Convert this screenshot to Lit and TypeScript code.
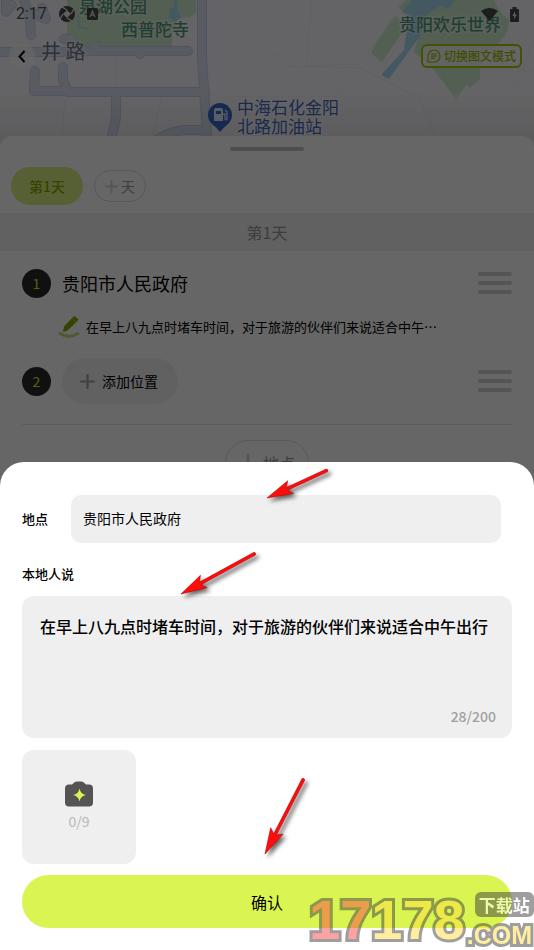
import { LitElement, html, css, svg } from "lit";
import { customElement, state } from "lit/decorators.js";

const arrow = (x: number, y: number, angle: number, length: number) => svg`
  <path
    transform="translate(${x} ${y}) rotate(${angle})"
    d="M0 0 L26 -7 L22 -1.5 L${length} -1.5 Q${length + 2} 0 ${length} 1.5 L22 1.5 L26 7 Z"
  />`;

/** Street map with place names, drawn behind the itinerary panel. */
@customElement("city-map")
class CityMap extends LitElement {
  static styles = css`
    :host {
      display: block;
      height: 148px;
      background: #fbfbff;
      font-family: "Noto Sans CJK SC", sans-serif;
    }
    svg {
      display: block;
      width: 100%;
      height: 100%;
    }
    .park {
      fill: #d3edcf;
    }
    .water {
      fill: #abddf5;
    }
    .lane {
      fill: none;
      stroke: #f0f1fb;
      stroke-width: 1;
    }
    .road {
      fill: none;
      stroke: #dde4f5;
      stroke-linecap: round;
      stroke-linejoin: round;
    }
    .edge {
      stroke: #cbd3ea;
    }
    .name {
      font-size: 17px;
      paint-order: stroke;
      stroke: #ffffff;
      stroke-opacity: 0.4;
      stroke-width: 3px;
    }
    .green {
      fill: #4f9b7c;
      font-weight: 500;
    }
    .street {
      font-size: 20px;
      fill: #72778f;
    }
    .poi {
      fill: #4568c4;
    }
  `;

  render() {
    const roads = svg`
      <path d="M202 -6 V58 L208 150" />
      <path d="M-6 52 H62 L95 51 H188 M95 46 V50 M140 53 V54" />
      <path d="M35 71 L34 91 H62 M63 67 V80 L68 92 H205" />
      <path d="M116 93 V118 L109 150" />
      <path d="M150 144 Q170 130 186 130 H206" />
      <path d="M6 -4 V12 L12 5 M24 0 L30 18 L31 35 M30 12 L46 19 L42 8" />
      <path d="M64 39 H72" />`;
    return html`
      <svg viewBox="0 0 534 148" preserveAspectRatio="xMidYMin slice" role="img" aria-label="地图">
        <defs>
          <linearGradient id="fade" x1="0" y1="0" x2="0" y2="1">
            <stop offset="0" stop-color="#000" stop-opacity="0" />
            <stop offset="1" stop-color="#000" stop-opacity="0.1" />
          </linearGradient>
        </defs>
        <path class="park" d="M67 0 H196 V13 L190 17 L178 19 L172 30 V46 H67 Z" />
        <path class="water" d="M174 0 H178 L177 8 L181 17 L175 22 L169 18 V9 L174 7 Z" />
        <path class="park" d="M424 14 L434 0 H494 Q500 14 509 20 Q509 32 500 42 Q488 54 480 66 V79 L470 88 L467 84 L456 99 L434 70 L414 52 Z" />
        <path class="park" d="M394 16 L399 18 L401 34 L382 62 L371 53 Q380 34 394 16 Z M406 0 H420 L405 12 L398 8 Z" />
        <path class="water" d="M412 0 H455 L449 9 L440 6 L424 17 L420 36 L389 79 L381 75 L404 50 L406 35 L413 18 L402 12 Z" />
        <path d="M78 14 Q80 24 78 26 L88 29" fill="none" stroke="#abddf5" stroke-width="1.5" />
        <path class="lane" d="M312 0 L306 66 L360 64 L395 16 M267 66 L276 52 L287 66 L360 68 L420 98 L434 136 M116 56 V88 M65 96 L62 136 M0 96 H534 M162 96 L152 136 M534 72 L488 60 L516 88 L534 40 M360 64 L338 96" />
        <g class="road edge" stroke-width="10">${roads}</g>
        <g class="road" stroke-width="8">${roads}</g>
        <rect y="90" width="534" height="58" fill="url(#fade)" />
        <text class="name green" x="79" y="13">泉湖公园</text>
        <text class="name green" x="121" y="36">西普陀寺</text>
        <text class="name green" x="399" y="31">贵阳欢乐世界</text>
        <text class="name street" x="41" y="59">井 路</text>
        <text class="name poi" x="237" y="114">中海石化金阳</text>
        <text class="name poi" x="237" y="133">北路加油站</text>
        <path d="M220 132 Q217 128 212 124 A12 12 0 1 1 228 124 Q223 128 220 132 Z" fill="#3768c8" />
        <path d="M214 110 Q214 108 216 108 H221 Q223 108 223 110 V121 H214 Z" fill="#dfe8ff" />
        <path d="M216 111 H221 V114 H216 Z" fill="#3768c8" />
        <path d="M223 114 H225 V119 Q226 121 227 119 V112 L225 110" fill="none" stroke="#dfe8ff" stroke-width="1.3" />
      </svg>
    `;
  }
}

@customElement("app-root")
class AppRoot extends LitElement {
  @state() private place = "贵阳市人民政府";
  @state() private note = "在早上八九点时堵车时间，对于旅游的伙伴们来说适合中午出行";

  static styles = css`
    :host {
      display: grid;
      min-height: 100vh;
      overflow: hidden;
      background: #ffffff;
      color: #000000;
      font-family: "Noto Sans CJK SC", sans-serif;
      font-size: 14px;
      line-height: 20px;
    }
    * {
      box-sizing: border-box;
    }
    button,
    input,
    textarea {
      margin: 0;
      padding: 0;
      border: 0;
      background: none;
      color: inherit;
      font: inherit;
    }
    svg {
      display: block;
    }
    .page,
    .layer {
      grid-area: 1 / 1;
      min-width: 0;
    }

    /* top of screen */
    .top {
      position: relative;
    }
    .over {
      position: absolute;
      inset: 0 0 auto 0;
    }
    .status {
      display: flex;
      align-items: center;
      gap: 12px;
      height: 28px;
      padding: 0 15px 0 16px;
      font-family: Roboto, sans-serif;
      font-size: 16px;
      color: #555555;
    }
    .status .push {
      margin-left: auto;
    }
    .nav {
      display: flex;
      align-items: center;
      justify-content: space-between;
      height: 56px;
      padding: 0 12px 0 9px;
    }
    .back {
      display: grid;
      place-items: center;
      width: 26px;
      height: 26px;
      border-radius: 50%;
      background: rgba(255, 255, 255, 0.7);
    }
    .mode {
      display: flex;
      align-items: center;
      gap: 3px;
      height: 24px;
      padding: 0 4px;
      border: 2px solid #a9cc00;
      border-radius: 6px;
      background: rgba(255, 255, 255, 0.7);
      color: #a0c000;
      font-size: 12px;
      font-weight: 500;
    }

    /* itinerary */
    .trip {
      position: relative;
      margin-top: -12px;
      border-radius: 12px 12px 0 0;
      background: #ffffff;
    }
    .grip {
      width: 74px;
      height: 4px;
      margin: 0 auto;
      border-radius: 2px;
      background: #c4c4c4;
    }
    .grip-row {
      padding-top: 11px;
      height: 31px;
    }
    .days {
      display: flex;
      align-items: center;
      gap: 11px;
      height: 38px;
      padding: 0 11px;
    }
    .day {
      height: 38px;
      padding: 0 18px;
      border-radius: 19px;
      background: #daf082;
      color: #87a800;
      font-weight: 500;
    }
    .add {
      display: flex;
      align-items: center;
      justify-content: center;
      gap: 3px;
      height: 32px;
      padding: 0 10px;
      border: 1px solid #e0e0e0;
      border-radius: 23px;
      color: #999999;
    }
    .band {
      margin: 8px 0 0;
      background: #f2f2f2;
      color: #999999;
      font-size: 16px;
      font-weight: 400;
      line-height: 38px;
      text-align: center;
    }
    .stops {
      margin: 0 22px;
      padding: 9px 0 20px;
      border-bottom: 1px solid #e6e6e6;
      list-style: none;
    }
    .stop {
      display: flex;
      align-items: center;
      gap: 11px;
      height: 46px;
    }
    .num {
      flex: none;
      width: 29px;
      border-radius: 50%;
      background: #2a2a2a;
      color: #d2f03c;
      line-height: 29px;
      text-align: center;
    }
    .title {
      font-size: 18px;
    }
    .drag {
      display: flex;
      flex-direction: column;
      gap: 5px;
      width: 34px;
      margin-left: auto;
    }
    .bar {
      height: 4px;
      border-radius: 2px;
      background: #d2d2d2;
    }
    .memo {
      display: flex;
      align-items: center;
      gap: 6px;
      height: 42px;
      margin: 0 0 10px;
      padding: 0 64px 0 36px;
      font-size: 13px;
    }
    .where {
      display: flex;
      align-items: center;
      gap: 7px;
      height: 46px;
      padding: 0 20px 0 18px;
      border-radius: 23px;
      background: #f2f2f2;
    }
    .more {
      display: flex;
      justify-content: center;
      padding-top: 15px;
    }
    .more .add {
      gap: 6px;
      height: 46px;
      padding: 0 13px;
      font-size: 16px;
    }

    /* edit sheet */
    .layer {
      position: relative;
      display: flex;
      flex-direction: column;
      justify-content: flex-end;
      background: rgba(0, 0, 0, 0.6);
    }
    .sheet {
      position: relative;
      display: flex;
      flex-direction: column;
      padding: 33px 22px 22px;
      border-radius: 24px 24px 0 0;
      background: #ffffff;
    }
    .label {
      font-size: 13px;
      font-weight: 500;
    }
    .line {
      display: flex;
      align-items: center;
      gap: 23px;
      padding-right: 11px;
      margin-bottom: 21px;
    }
    .input {
      flex: 1;
      min-width: 0;
      height: 48px;
      padding: 0 12px 2px;
      border-radius: 10px;
      background: #efefef;
    }
    .box {
      display: flex;
      flex-direction: column;
      height: 142px;
      margin: 12px 0;
      padding: 18px 16px 12px 18px;
      border-radius: 12px;
      background: #efefef;
    }
    .area {
      flex: 1;
      display: block;
      width: 100%;
      overflow: hidden;
      resize: none;
      outline: none;
      font-size: 16px;
      font-weight: 500;
      line-height: 24px;
    }
    .count {
      color: #a0a0a0;
      font-weight: 500;
      text-align: right;
    }
    .photo {
      display: flex;
      flex-direction: column;
      align-items: center;
      justify-content: center;
      gap: 4px;
      width: 114px;
      height: 114px;
      margin-bottom: 11px;
      padding-bottom: 2px;
      border-radius: 12px;
      background: #efefef;
      color: #b8b8b8;
    }
    .ok {
      height: 53px;
      border-radius: 27px;
      background: #daf552;
      font-size: 16px;
    }
    .marks {
      position: absolute;
      top: 0;
      left: 0;
      width: 100%;
      height: 100%;
      overflow: visible;
      pointer-events: none;
      filter: drop-shadow(3px 3px 2px rgba(0, 0, 0, 0.6));
    }

    /* site stamp */
    .stamp {
      position: absolute;
      right: 0;
      bottom: 0;
      display: flex;
      align-items: flex-end;
      gap: 2px;
      opacity: 0.5;
      pointer-events: none;
      font-family: "Liberation Sans", sans-serif;
      font-weight: 700;
    }
    .digits,
    .com {
      paint-order: stroke fill;
      -webkit-text-stroke: 6px #404040;
      color: #ffdf3f;
    }
    .digits {
      font-size: 56px;
      line-height: 60px;
    }
    .red {
      color: #ff4848;
    }
    .side {
      display: flex;
      flex-direction: column;
      gap: 4px;
    }
    .tag {
      margin-left: 8px;
      border-radius: 6px;
      background: #404040;
      color: #ffffff;
      font-family: "Noto Sans CJK SC", sans-serif;
      font-size: 17px;
      line-height: 25px;
      text-align: center;
    }
    .com {
      padding-right: 2px;
      font-size: 25px;
      line-height: 29px;
    }
  `;

  private plus(size: number, color: string, width: number) {
    return html`<svg width=${size} height=${size} viewBox="0 0 14 14" aria-hidden="true">
      <path d="M7 1 V13 M1 7 H13" stroke=${color} stroke-width=${width} stroke-linecap="round" />
    </svg>`;
  }

  private drag() {
    return html`<button class="drag" aria-label="拖动排序">
      <span class="bar"></span><span class="bar"></span><span class="bar"></span>
    </button>`;
  }

  render() {
    return html`
      <main class="page">
        <div class="top">
          <city-map></city-map>
          <div class="over">
            <div class="status">
              <span>2:17</span>
              <svg width="16" height="16" viewBox="0 0 16 16" aria-hidden="true">
                <circle cx="8" cy="8" r="8" fill="#4a4a4a" />
                <path d="M8 4 L12 8 L8 12 L4 8 Z" fill="#eeeeee" />
                <path d="M8 4 L3 1 M12 8 L15 3 M8 12 L13 15 M4 8 L1 13" stroke="#eeeeee" stroke-width="1.3" />
              </svg>
              <svg width="11" height="12" viewBox="0 0 11 12" aria-hidden="true">
                <rect width="11" height="12" rx="1.5" fill="#4a4a4a" />
                <path d="M3 9 L5.5 3 L8 9 M4 7.2 H7" fill="none" stroke="#dddddd" stroke-width="1.2" />
              </svg>
              <svg class="push" width="17" height="13" viewBox="0 0 17 13" aria-hidden="true">
                <path d="M0 3 Q8.5 -3 17 3 L8.5 13 Z" fill="#4a4a4a" />
              </svg>
              <svg width="9" height="15" viewBox="0 0 9 15" aria-hidden="true">
                <path d="M0 3 Q0 2 1 2 H2.500 V0 H6.500 V2 H8 Q9 2 9 3 V14 Q9 15 8 15 H1 Q0 15 0 14 Z" fill="#4a4a4a" />
                <path d="M5 4 L2.500 9 H4.200 V12.500 L6.800 7.500 H5 Z" fill="#eeeeee" />
              </svg>
            </div>
            <div class="nav">
              <button class="back" aria-label="返回">
                <svg width="8" height="13" viewBox="0 0 8 13"><path d="M6.500 1 L1.500 6.500 L6.500 12" fill="none" stroke="#000" stroke-width="2" /></svg>
              </button>
              <button class="mode">
                <svg width="14" height="14" viewBox="0 0 14 14" aria-hidden="true">
                  <path d="M1 13 V7 A6 6 0 1 1 7 13 Z M4 5 H10 M4 7.200 H10 M4 9.400 H8" fill="none" stroke="#a0c000" stroke-width="1.200" stroke-linejoin="round" />
                </svg>
                切换图文模式
              </button>
            </div>
          </div>
        </div>
        <section class="trip">
          <div class="grip-row"><div class="grip"></div></div>
          <div class="days">
            <button class="day">第1天</button>
            <button class="add">${this.plus(13, "#d5d5d5", 2)}天</button>
          </div>
          <h2 class="band">第1天</h2>
          <ol class="stops">
            <li>
              <div class="stop">
                <span class="num">1</span>
                <span class="title">贵阳市人民政府</span>
                ${this.drag()}
              </div>
              <p class="memo">
                <svg width="22" height="24" viewBox="0 0 22 24" aria-hidden="true">
                  <path d="M2 18.500 Q11 24 20 18.500" fill="none" stroke="#c9dc78" stroke-width="3" stroke-linecap="round" />
                  <path d="M5 17 L6 11.500 L14 3 L16.500 1 L20.500 4.500 L18.500 7 L9.500 15.500 Z" fill="#86a800" />
                  <path d="M14 3.300 L18.300 7.300" stroke="#c9dc78" stroke-width="0.600" />
                </svg>
                <span>在早上八九点时堵车时间，对于旅游的伙伴们来说适合中午…</span>
              </p>
            </li>
            <li class="stop">
              <span class="num">2</span>
              <button class="where">${this.plus(15, "#a0a0a0", 2)}添加位置</button>
              ${this.drag()}
            </li>
          </ol>
          <div class="more">
            <button class="add">${this.plus(18, "#d5d5d5", 2)}地点</button>
          </div>
        </section>
      </main>

      <div class="layer">
        <form class="sheet" @submit=${(e: Event) => e.preventDefault()}>
          <div class="line">
            <label class="label" for="place">地点</label>
            <input
              id="place"
              class="input"
              type="text"
              .value=${this.place}
              @input=${(e: Event) => (this.place = (e.target as HTMLInputElement).value)}
            />
          </div>
          <label class="label" for="note">本地人说</label>
          <div class="box">
            <textarea
              id="note"
              class="area"
              maxlength="200"
              .value=${this.note}
              @input=${(e: Event) => (this.note = (e.target as HTMLTextAreaElement).value)}
            ></textarea>
            <div class="count">${this.note.length}/200</div>
          </div>
          <button class="photo" type="button" aria-label="添加照片 0/9">
            <svg width="28" height="26" viewBox="0 0 28 26" aria-hidden="true">
              <path d="M4 3.500 H7 L9.500 1.200 Q10.500 0.500 12 0.500 H16 Q17.500 0.500 18.500 1.200 L21 3.500 H24 Q28 3.500 28 7.500 V21.500 Q28 25.500 24 25.500 H4 Q0 25.500 0 21.500 V7.500 Q0 3.500 4 3.500 Z" fill="#555353" />
              <path d="M14.500 7.500 Q15.500 13 21 14 Q15.500 15 14.500 20.500 Q13.500 15 8 14 Q13.500 13 14.500 7.500 Z" fill="#daf552" />
            </svg>
            <span>0/9</span>
          </button>
          <button class="ok" type="submit">确认</button>
          <svg class="marks" viewBox="0 0 534 488" fill="#ff0d0d" stroke="#b00000" stroke-width="0.500" aria-hidden="true">
            ${arrow(267, 36, -24.7, 66)} ${arrow(181, 132, -28.7, 84)} ${arrow(265, 392, -62.8, 84)}
          </svg>
        </form>
        <div class="stamp">
          <span class="digits"><span class="red">17</span>178</span>
          <span class="side">
            <span class="tag">下载站</span>
            <span class="com">.COM</span>
          </span>
        </div>
      </div>
    `;
  }
}
